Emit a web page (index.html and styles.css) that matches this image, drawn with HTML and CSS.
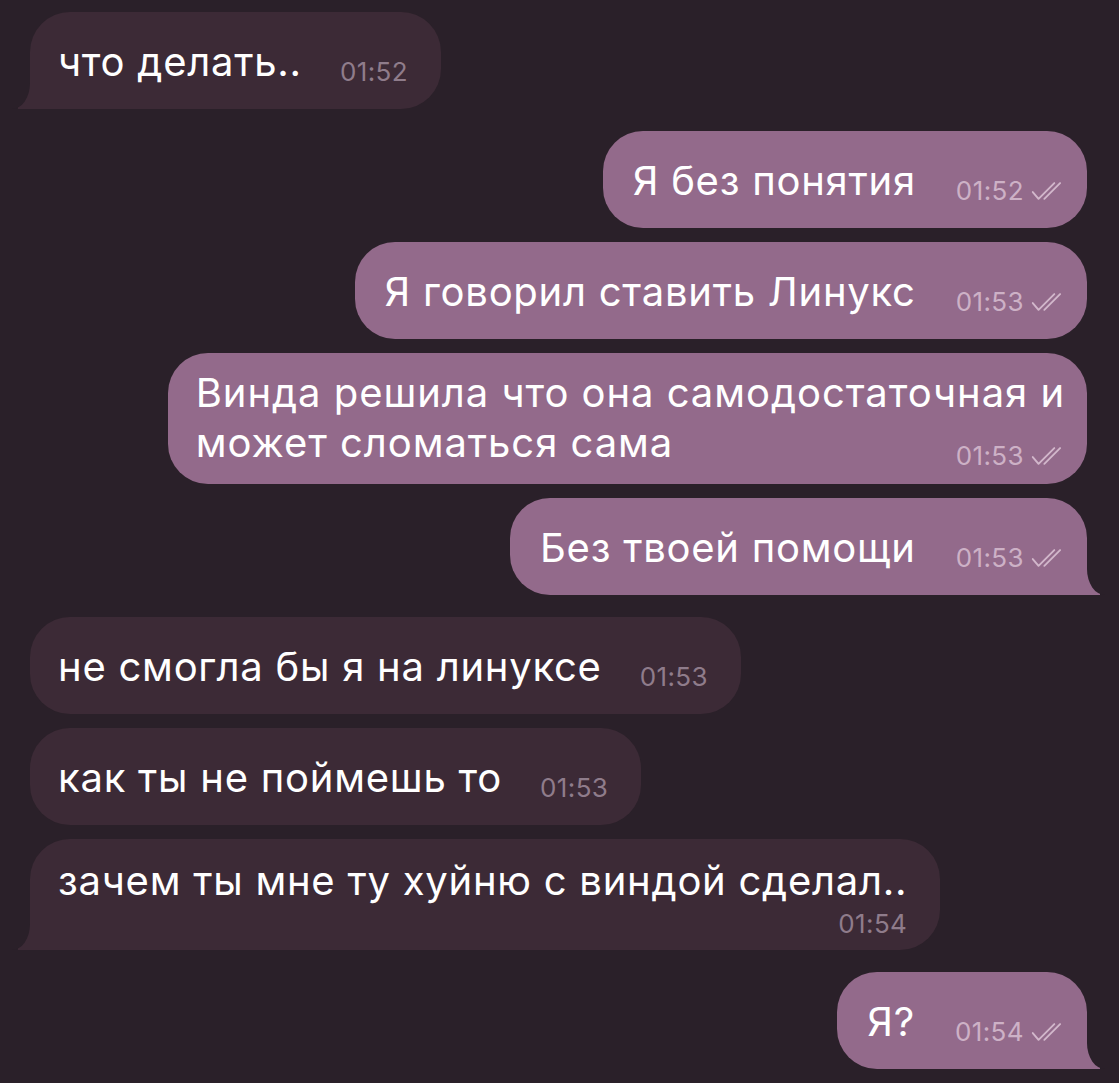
FILE: index.html
```html
<!DOCTYPE html>
<html lang="ru">
<head>
    <meta charset="UTF-8">
    <meta name="viewport" content="width=device-width, initial-scale=1.0">
    <title>Чат</title>
    <link rel="stylesheet" href="styles.css">
</head>
<body>
    <main class="chat">
        <!-- входящие -->
        <div class="row in">
            <div class="bubble tail">
                <span class="text">что делать..</span>
                <span class="meta">01:52</span>
            </div>
        </div>

        <!-- исходящие -->
        <div class="row out group">
            <div class="bubble">
                <span class="text">Я без понятия</span>
                <span class="meta">01:52 <svg class="check" viewBox="0 0 32 20"><path d="M1.5 10.5 L7 17 L22 2 M12.5 17 L27.5 2"/></svg></span>
            </div>
        </div>
        <div class="row out">
            <div class="bubble">
                <span class="text">Я говорил ставить Линукс</span>
                <span class="meta">01:53 <svg class="check" viewBox="0 0 32 20"><path d="M1.5 10.5 L7 17 L22 2 M12.5 17 L27.5 2"/></svg></span>
            </div>
        </div>
        <div class="row out">
            <div class="bubble multi">
                <div class="text">Винда решила что она самодостаточная и<br>может сломаться сама</div>
                <div class="meta">01:53 <svg class="check" viewBox="0 0 32 20"><path d="M1.5 10.5 L7 17 L22 2 M12.5 17 L27.5 2"/></svg></div>
            </div>
        </div>
        <div class="row out">
            <div class="bubble tail">
                <span class="text">Без твоей помощи</span>
                <span class="meta">01:53 <svg class="check" viewBox="0 0 32 20"><path d="M1.5 10.5 L7 17 L22 2 M12.5 17 L27.5 2"/></svg></span>
            </div>
        </div>

        <!-- входящие -->
        <div class="row in group">
            <div class="bubble">
                <span class="text">не смогла бы я на линуксе</span>
                <span class="meta">01:53</span>
            </div>
        </div>
        <div class="row in">
            <div class="bubble">
                <span class="text">как ты не поймешь то</span>
                <span class="meta">01:53</span>
            </div>
        </div>
        <div class="row in">
            <div class="bubble stack tail">
                <div class="text">зачем ты мне ту хуйню с виндой сделал..</div>
                <div class="meta">01:54</div>
            </div>
        </div>

        <!-- исходящие -->
        <div class="row out group">
            <div class="bubble tail">
                <span class="text">Я?</span>
                <span class="meta">01:54 <svg class="check" viewBox="0 0 32 20"><path d="M1.5 10.5 L7 17 L22 2 M12.5 17 L27.5 2"/></svg></span>
            </div>
        </div>
    </main>
</body>
</html>
```

FILE: styles.css
```css
body {
    margin: 0;
    background-color: #2a2029;
    font-family: Inter, "Noto Sans", sans-serif;
    color: #fff;
}
.chat {
    display: flex;
    flex-direction: column;
    gap: 14px;
    padding: 12px 32px 0 30px;
}
.row {
    display: flex;
}
.row.in {
    justify-content: flex-start;
}
.row.out {
    justify-content: flex-end;
}
.row.group {
    margin-top: 8px; /* 22px tra i gruppi */
}

.bubble {
    position: relative;
    display: flex;
    align-items: flex-end;
    border-radius: 40px;
    padding: 28px 33px 25px 28px;
    background: #3c2a36;
}
.out .bubble {
    background: #936a8b;
    padding: 28px 22px 25px 30px;
}
.text {
    font-size: 40px;
    line-height: 44px;
    letter-spacing: 0.75px;
}
.meta {
    display: flex;
    align-items: center;
    gap: 7px;
    margin-left: 38px;
    margin-bottom: -2px;
    font-size: 26px;
    line-height: 28px;
    letter-spacing: 0.4px;
    color: #8f7c8b;
    white-space: nowrap;
}
.out .meta {
    color: #cdb1c6;
    margin-left: 40px;
}
.check {
    width: 34px;
    height: 21px;
    fill: none;
    stroke: #d2b7cb;
    stroke-width: 1.8;
    stroke-linecap: round;
    stroke-linejoin: round;
}

/* bolle su più righe */
.bubble.multi, .bubble.stack {
    display: block;
}
.bubble.multi .meta, .bubble.stack .meta {
    justify-content: flex-end;
    margin: 0;
}
.bubble.multi {
    padding-top: 15px;
    padding-bottom: 14px;
    padding-left: 28px;
}
.bubble.multi .text {
    line-height: 50px;
    letter-spacing: 0.95px;
}
.bubble.multi .meta {
    margin-top: -26px;
}
.bubble.stack {
    padding-top: 20px;
    padding-bottom: 12px;
}
.bubble.stack .meta {
    margin-top: 7px;
}

/* codina */
.bubble.tail::before, .bubble.tail::after {
    content: "";
    position: absolute;
    bottom: 0;
}
.in .bubble.tail {
    border-bottom-left-radius: 0;
}
.in .bubble.tail::before {
    left: -12px;
    width: 26px;
    height: 32px;
    background: #3c2a36;
}
.in .bubble.tail::after {
    left: -32px;
    width: 32px;
    height: 34px;
    background: #2a2029;
    border-bottom-right-radius: 18px 26px;
}
.out .bubble.tail {
    border-bottom-right-radius: 0;
}
.out .bubble.tail::before {
    right: -13px;
    width: 26px;
    height: 32px;
    background: #936a8b;
}
.out .bubble.tail::after {
    right: -32px;
    width: 32px;
    height: 34px;
    background: #2a2029;
    border-bottom-left-radius: 18px 26px;
}
```
